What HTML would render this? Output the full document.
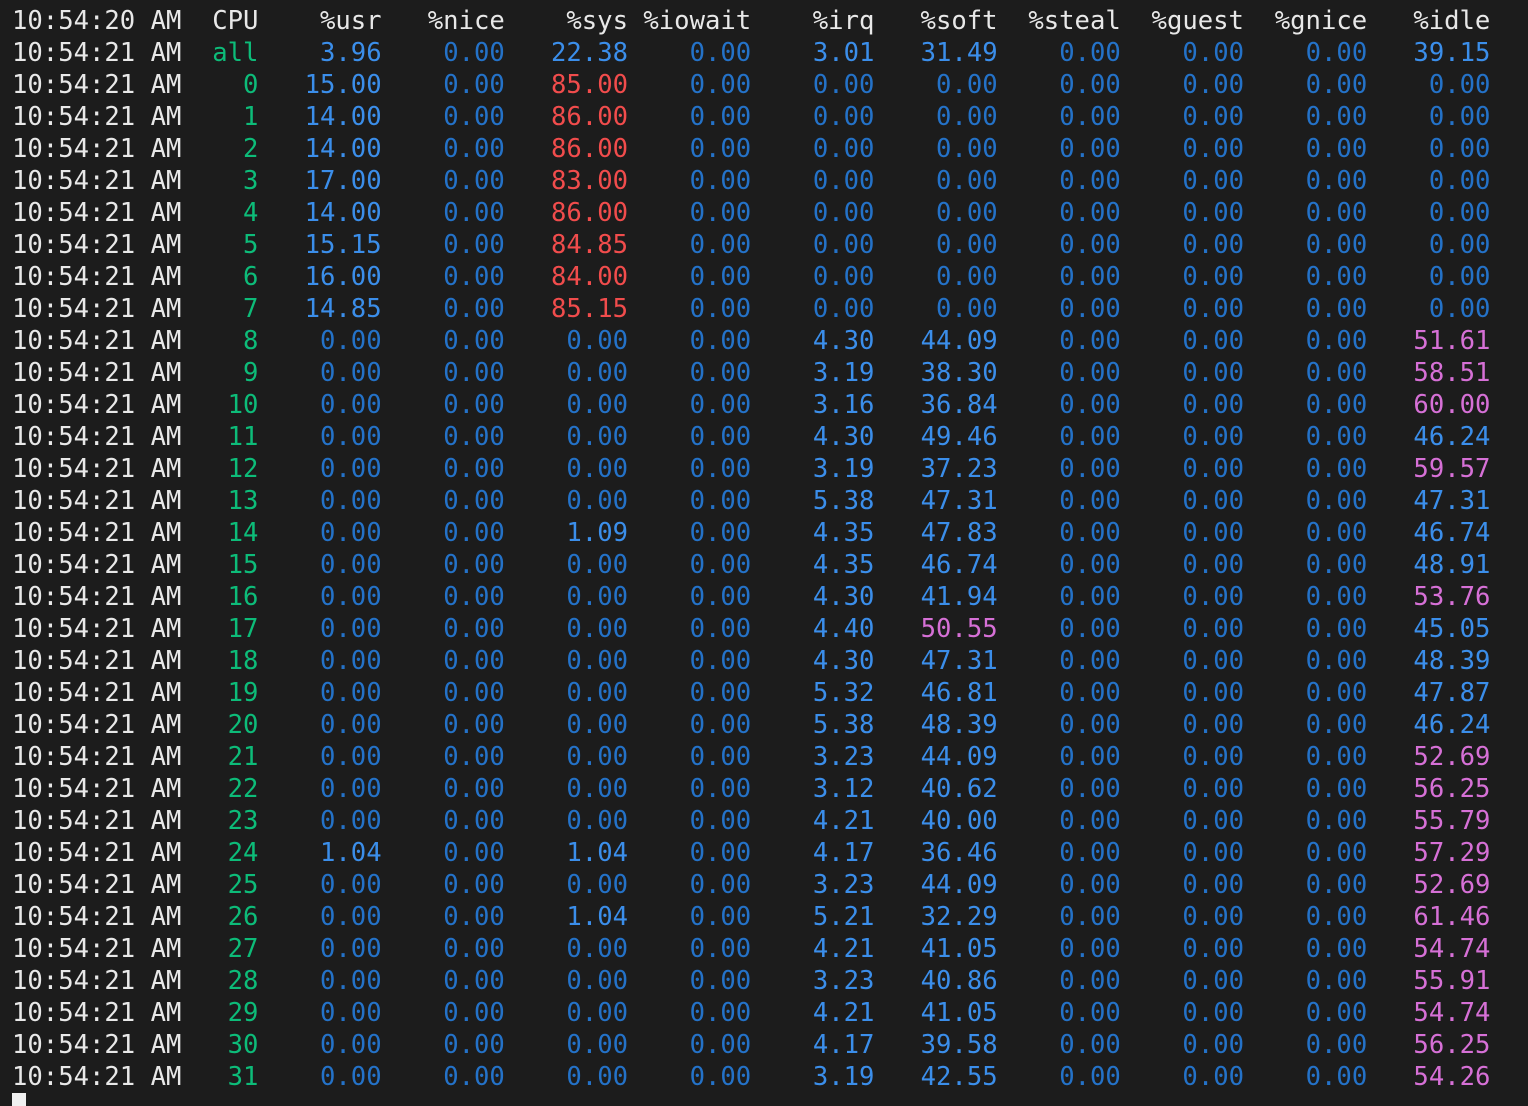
<!DOCTYPE html>
<html><head><meta charset="utf-8"><style>
html,body{margin:0;padding:0;background:#1c1c1c;width:1528px;height:1106px;overflow:hidden}
pre{margin:0;padding:5px 0 0 12px;font-family:"DejaVu Sans Mono","Liberation Mono",monospace;font-size:25.58px;line-height:32px;color:#e8e8e8;letter-spacing:0}
z{color:#2472c8}l{color:#3b8eea}r{color:#f14c4c}m{color:#d670d6}g{color:#0dbc79}
.cur{position:absolute;left:12px;top:1093px;width:14px;height:13px;background:#f0f0f0}
</style></head><body><pre>10:54:20 AM  CPU    %usr   %nice    %sys %iowait    %irq   %soft  %steal  %guest  %gnice   %idle
10:54:21 AM<g>  all</g><l>    3.96</l><z>    0.00</z><l>   22.38</l><z>    0.00</z><l>    3.01</l><l>   31.49</l><z>    0.00</z><z>    0.00</z><z>    0.00</z><l>   39.15</l>
10:54:21 AM<g>    0</g><l>   15.00</l><z>    0.00</z><r>   85.00</r><z>    0.00</z><z>    0.00</z><z>    0.00</z><z>    0.00</z><z>    0.00</z><z>    0.00</z><z>    0.00</z>
10:54:21 AM<g>    1</g><l>   14.00</l><z>    0.00</z><r>   86.00</r><z>    0.00</z><z>    0.00</z><z>    0.00</z><z>    0.00</z><z>    0.00</z><z>    0.00</z><z>    0.00</z>
10:54:21 AM<g>    2</g><l>   14.00</l><z>    0.00</z><r>   86.00</r><z>    0.00</z><z>    0.00</z><z>    0.00</z><z>    0.00</z><z>    0.00</z><z>    0.00</z><z>    0.00</z>
10:54:21 AM<g>    3</g><l>   17.00</l><z>    0.00</z><r>   83.00</r><z>    0.00</z><z>    0.00</z><z>    0.00</z><z>    0.00</z><z>    0.00</z><z>    0.00</z><z>    0.00</z>
10:54:21 AM<g>    4</g><l>   14.00</l><z>    0.00</z><r>   86.00</r><z>    0.00</z><z>    0.00</z><z>    0.00</z><z>    0.00</z><z>    0.00</z><z>    0.00</z><z>    0.00</z>
10:54:21 AM<g>    5</g><l>   15.15</l><z>    0.00</z><r>   84.85</r><z>    0.00</z><z>    0.00</z><z>    0.00</z><z>    0.00</z><z>    0.00</z><z>    0.00</z><z>    0.00</z>
10:54:21 AM<g>    6</g><l>   16.00</l><z>    0.00</z><r>   84.00</r><z>    0.00</z><z>    0.00</z><z>    0.00</z><z>    0.00</z><z>    0.00</z><z>    0.00</z><z>    0.00</z>
10:54:21 AM<g>    7</g><l>   14.85</l><z>    0.00</z><r>   85.15</r><z>    0.00</z><z>    0.00</z><z>    0.00</z><z>    0.00</z><z>    0.00</z><z>    0.00</z><z>    0.00</z>
10:54:21 AM<g>    8</g><z>    0.00</z><z>    0.00</z><z>    0.00</z><z>    0.00</z><l>    4.30</l><l>   44.09</l><z>    0.00</z><z>    0.00</z><z>    0.00</z><m>   51.61</m>
10:54:21 AM<g>    9</g><z>    0.00</z><z>    0.00</z><z>    0.00</z><z>    0.00</z><l>    3.19</l><l>   38.30</l><z>    0.00</z><z>    0.00</z><z>    0.00</z><m>   58.51</m>
10:54:21 AM<g>   10</g><z>    0.00</z><z>    0.00</z><z>    0.00</z><z>    0.00</z><l>    3.16</l><l>   36.84</l><z>    0.00</z><z>    0.00</z><z>    0.00</z><m>   60.00</m>
10:54:21 AM<g>   11</g><z>    0.00</z><z>    0.00</z><z>    0.00</z><z>    0.00</z><l>    4.30</l><l>   49.46</l><z>    0.00</z><z>    0.00</z><z>    0.00</z><l>   46.24</l>
10:54:21 AM<g>   12</g><z>    0.00</z><z>    0.00</z><z>    0.00</z><z>    0.00</z><l>    3.19</l><l>   37.23</l><z>    0.00</z><z>    0.00</z><z>    0.00</z><m>   59.57</m>
10:54:21 AM<g>   13</g><z>    0.00</z><z>    0.00</z><z>    0.00</z><z>    0.00</z><l>    5.38</l><l>   47.31</l><z>    0.00</z><z>    0.00</z><z>    0.00</z><l>   47.31</l>
10:54:21 AM<g>   14</g><z>    0.00</z><z>    0.00</z><l>    1.09</l><z>    0.00</z><l>    4.35</l><l>   47.83</l><z>    0.00</z><z>    0.00</z><z>    0.00</z><l>   46.74</l>
10:54:21 AM<g>   15</g><z>    0.00</z><z>    0.00</z><z>    0.00</z><z>    0.00</z><l>    4.35</l><l>   46.74</l><z>    0.00</z><z>    0.00</z><z>    0.00</z><l>   48.91</l>
10:54:21 AM<g>   16</g><z>    0.00</z><z>    0.00</z><z>    0.00</z><z>    0.00</z><l>    4.30</l><l>   41.94</l><z>    0.00</z><z>    0.00</z><z>    0.00</z><m>   53.76</m>
10:54:21 AM<g>   17</g><z>    0.00</z><z>    0.00</z><z>    0.00</z><z>    0.00</z><l>    4.40</l><m>   50.55</m><z>    0.00</z><z>    0.00</z><z>    0.00</z><l>   45.05</l>
10:54:21 AM<g>   18</g><z>    0.00</z><z>    0.00</z><z>    0.00</z><z>    0.00</z><l>    4.30</l><l>   47.31</l><z>    0.00</z><z>    0.00</z><z>    0.00</z><l>   48.39</l>
10:54:21 AM<g>   19</g><z>    0.00</z><z>    0.00</z><z>    0.00</z><z>    0.00</z><l>    5.32</l><l>   46.81</l><z>    0.00</z><z>    0.00</z><z>    0.00</z><l>   47.87</l>
10:54:21 AM<g>   20</g><z>    0.00</z><z>    0.00</z><z>    0.00</z><z>    0.00</z><l>    5.38</l><l>   48.39</l><z>    0.00</z><z>    0.00</z><z>    0.00</z><l>   46.24</l>
10:54:21 AM<g>   21</g><z>    0.00</z><z>    0.00</z><z>    0.00</z><z>    0.00</z><l>    3.23</l><l>   44.09</l><z>    0.00</z><z>    0.00</z><z>    0.00</z><m>   52.69</m>
10:54:21 AM<g>   22</g><z>    0.00</z><z>    0.00</z><z>    0.00</z><z>    0.00</z><l>    3.12</l><l>   40.62</l><z>    0.00</z><z>    0.00</z><z>    0.00</z><m>   56.25</m>
10:54:21 AM<g>   23</g><z>    0.00</z><z>    0.00</z><z>    0.00</z><z>    0.00</z><l>    4.21</l><l>   40.00</l><z>    0.00</z><z>    0.00</z><z>    0.00</z><m>   55.79</m>
10:54:21 AM<g>   24</g><l>    1.04</l><z>    0.00</z><l>    1.04</l><z>    0.00</z><l>    4.17</l><l>   36.46</l><z>    0.00</z><z>    0.00</z><z>    0.00</z><m>   57.29</m>
10:54:21 AM<g>   25</g><z>    0.00</z><z>    0.00</z><z>    0.00</z><z>    0.00</z><l>    3.23</l><l>   44.09</l><z>    0.00</z><z>    0.00</z><z>    0.00</z><m>   52.69</m>
10:54:21 AM<g>   26</g><z>    0.00</z><z>    0.00</z><l>    1.04</l><z>    0.00</z><l>    5.21</l><l>   32.29</l><z>    0.00</z><z>    0.00</z><z>    0.00</z><m>   61.46</m>
10:54:21 AM<g>   27</g><z>    0.00</z><z>    0.00</z><z>    0.00</z><z>    0.00</z><l>    4.21</l><l>   41.05</l><z>    0.00</z><z>    0.00</z><z>    0.00</z><m>   54.74</m>
10:54:21 AM<g>   28</g><z>    0.00</z><z>    0.00</z><z>    0.00</z><z>    0.00</z><l>    3.23</l><l>   40.86</l><z>    0.00</z><z>    0.00</z><z>    0.00</z><m>   55.91</m>
10:54:21 AM<g>   29</g><z>    0.00</z><z>    0.00</z><z>    0.00</z><z>    0.00</z><l>    4.21</l><l>   41.05</l><z>    0.00</z><z>    0.00</z><z>    0.00</z><m>   54.74</m>
10:54:21 AM<g>   30</g><z>    0.00</z><z>    0.00</z><z>    0.00</z><z>    0.00</z><l>    4.17</l><l>   39.58</l><z>    0.00</z><z>    0.00</z><z>    0.00</z><m>   56.25</m>
10:54:21 AM<g>   31</g><z>    0.00</z><z>    0.00</z><z>    0.00</z><z>    0.00</z><l>    3.19</l><l>   42.55</l><z>    0.00</z><z>    0.00</z><z>    0.00</z><m>   54.26</m></pre><div class="cur"></div></body></html>
